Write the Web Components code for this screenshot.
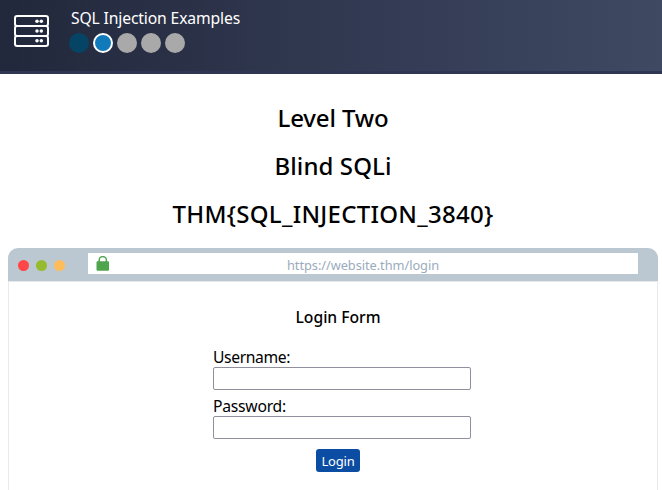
<!DOCTYPE html>
<html lang="en">
<head>
<meta charset="utf-8">
<title>SQL Injection Examples</title>
<style>
body{margin:0;background:#fff;color:#000;font-family:"Noto Sans","Open Sans",sans-serif;overflow:hidden}
</style>
</head>
<body>
<level-header current="2" total="5"><fit-text width="169">SQL Injection Examples</fit-text></level-header>
<level-titles>
<fit-text width="111">Level Two</fit-text>
<fit-text width="117">Blind SQLi</fit-text>
<fit-text width="321">THM{SQL_INJECTION_3840}</fit-text>
</level-titles>
<mock-browser>
<fit-text slot="url" width="152">https://website.thm/login</fit-text>
<login-form></login-form>
</mock-browser>
<script>
// Inline text whose tracking is adjusted to occupy a given width.
customElements.define('fit-text', class extends HTMLElement {
  connectedCallback() {
    this.attachShadow({mode:'open'}).innerHTML =
      '<style>:host{display:inline-block;white-space:nowrap}span{display:inline-block}</style><span><slot></slot></span>';
    requestAnimationFrame(() => this.fit());
    this.fit();
  }
  fit() {
    const s = this.shadowRoot.querySelector('span');
    const w = +this.getAttribute('width');
    s.style.letterSpacing = '0';
    const n = this.textContent.length;
    const sp = (w - s.getBoundingClientRect().width) / n;
    s.style.letterSpacing = sp.toFixed(3) + 'px';
  }
});
customElements.define('level-header', class extends HTMLElement {
  connectedCallback() {
    const cur = +this.getAttribute('current'), total = +this.getAttribute('total');
    let dots = '';
    for (let i = 1; i <= total; i++) dots += `<i class="${i < cur ? 'done' : i === cur ? 'now' : ''}"></i>`;
    this.attachShadow({mode:'open'}).innerHTML = `<style>
:host{display:flex;box-sizing:border-box;height:74px;background:linear-gradient(90deg,#22283b,#343c55 60%,#3f4962);border-bottom:3px solid #2f3654;color:#fff;padding:0 0 0 14px}
svg{flex:none;margin-top:15px;width:35px;height:32px}
.info{margin-left:20px;padding-top:7px}
.title{font-size:15.7px;line-height:22px;height:22px;padding-left:2px}
.dots{display:flex;gap:4px;margin-top:4px}
i{box-sizing:border-box;width:20px;height:20px;border-radius:50%;background:#a9a9a9}
.done{background:#064465}.now{background:#117abb;border:2px solid #fff}
</style>
<svg viewBox="0 0 35 32"><g fill="none" stroke="#fff" stroke-width="2"><rect x="1" y="1" width="33" height="10" rx="2.2"/><rect x="1" y="11" width="33" height="10" rx="2.2"/><rect x="1" y="21" width="33" height="10" rx="2.2"/></g><g fill="#fff"><circle cx="23" cy="6.3" r="1.75"/><circle cx="27.3" cy="6.3" r="1.75"/><circle cx="23" cy="16" r="1.75"/><circle cx="27.3" cy="16" r="1.75"/><circle cx="23" cy="25.8" r="1.75"/><circle cx="27.3" cy="25.8" r="1.75"/></g></svg>
<div class="info"><div class="title"><slot></slot></div><div class="dots">${dots}</div></div>`;
  }
});
customElements.define('level-titles', class extends HTMLElement {
  connectedCallback() {
    this.attachShadow({mode:'open'}).innerHTML = `<style>
:host{display:flex;flex-direction:column;align-items:center;gap:16px;padding:28px 0 18px 4px;font-size:24px;font-weight:500;line-height:32px}
::slotted(*){height:32px}
</style><slot></slot>`;
  }
});
customElements.define('mock-browser', class extends HTMLElement {
  connectedCallback() {
    this.attachShadow({mode:'open'}).innerHTML = `<style>
:host{display:block;margin:0 4px 0 8px}
.bar{display:flex;box-sizing:border-box;height:33px;background:#bbc8d2;border-radius:10px 10px 0 0;padding:5px 20px 7px 10px}
.lights{display:flex;gap:7px;width:70px;padding-top:7px}
.lights i{width:11px;height:11px;border-radius:50%}
.addr{flex:1;display:flex;height:21px;background:#fff;color:#9aabbd;font-size:12.8px;line-height:25px}
svg{flex:none;width:14px;height:15px;margin:3px 0 0 8px}
.url{flex:1;text-align:center;padding-right:22px}
.page{box-sizing:border-box;height:209px;border:1px solid #e7eaec;border-bottom:0}
</style>
<div class="bar"><div class="lights"><i style="background:#ff4748"></i><i style="background:#97bb2f"></i><i style="background:#ffbc5b"></i></div>
<div class="addr"><svg viewBox="0 0 14 15"><path d="M3.2 6V4.2a3.6 3.6 0 0 1 7.2 0V6" fill="none" stroke="#4ea54e" stroke-width="1.5"/><path d="M1.2 5.2H12.4L13 6V14L12.2 14.7H1.2L.5 14V6Z" fill="#4ea54e"/></svg><div class="url"><slot name="url"></slot></div></div></div>
<div class="page"><slot></slot></div>`;
  }
});
customElements.define('form-field', class extends HTMLElement {
  connectedCallback() {
    this.attachShadow({mode:'open'}).innerHTML = `<style>
:host{display:block;height:49px}
label{display:block;font-size:15.7px;line-height:20px;height:20px}
input{display:block;box-sizing:border-box;width:258px;height:23px;border:1px solid #8f8f9d;border-radius:2px;margin:0;background:#fff;outline:0}
</style><label><slot></slot></label><input type="${this.getAttribute('type')}">`;
  }
});
customElements.define('login-form', class extends HTMLElement {
  connectedCallback() {
    this.attachShadow({mode:'open'}).innerHTML = `<style>
:host{display:flex;flex-direction:column;align-items:center;padding-top:25px}
h2{margin:0 0 19px 10px;font-size:15.7px;font-weight:500;line-height:21px;height:21px}
.fields{margin-left:18px}
button{display:flex;justify-content:center;box-sizing:border-box;width:44px;height:23px;border:0;border-radius:3px;background:#0b4da2;color:#fff;font:13px/24px "Noto Sans",sans-serif;padding:0;margin:4px 0 0 10px}
</style>
<h2><fit-text width="85">Login Form</fit-text></h2>
<div class="fields"><form-field type="text"><fit-text width="77">Username:</fit-text></form-field><form-field type="password"><fit-text width="73">Password:</fit-text></form-field></div>
<button><fit-text width="33">Login</fit-text></button>`;
  }
});
</script>
</body>
</html>
